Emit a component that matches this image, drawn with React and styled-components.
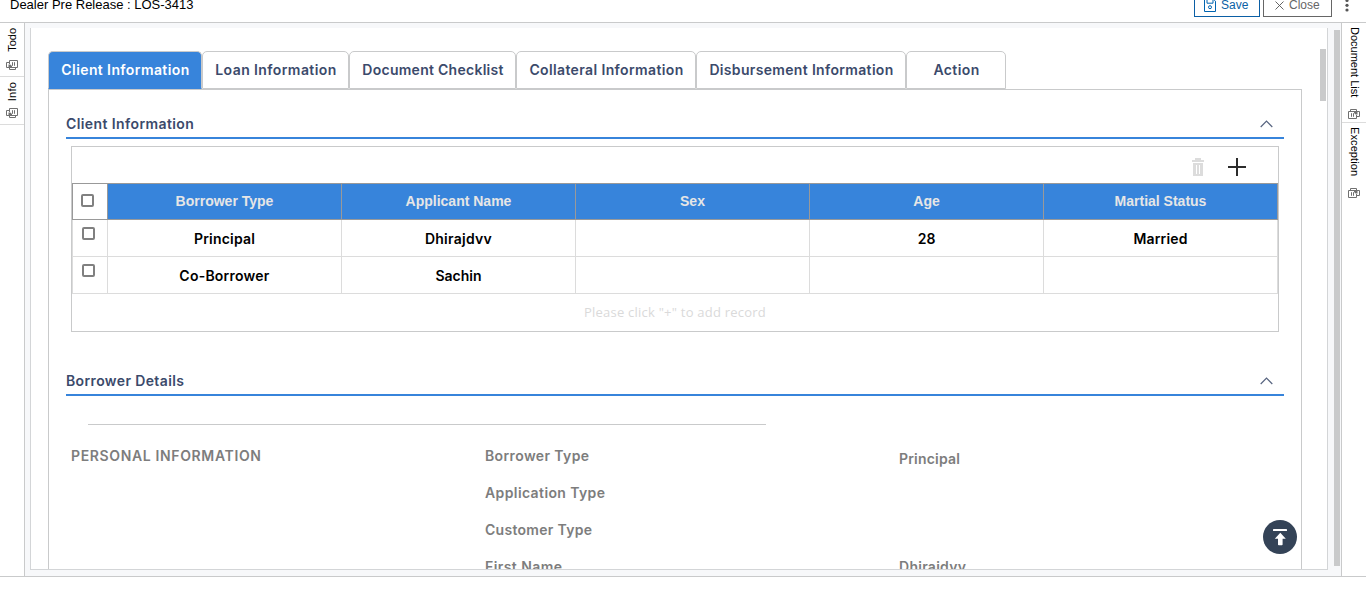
import React from "react";
import styled, { createGlobalStyle, css } from "styled-components";

const c = {
  blue: "#3784db",
  line: "#c9cacb",
  soft: "#dcdcdc",
  frame: "#d3d5d7",
  navy: "#3b4a6b",
  grey: "#7d7d7d",
  gutter: "#f7f8fa",
};

const Global = createGlobalStyle`
  *, *::before, *::after { box-sizing: border-box; }
  html, body { margin: 0; padding: 0; height: 100%; overflow: hidden; background: #fff; }
  body { font-family: "Inter", "Open Sans", sans-serif; font-size: 14px; }
`;

const arial = `"Liberation Sans", Arial, sans-serif`;

const tracked = css`
  letter-spacing: ${(p) => p.$track || 0}px;
`;

const Page = styled.div`
  display: flex;
  flex-direction: column;
  height: 577px;
  border-bottom: 1px solid ${c.line};
`;

const TopBar = styled.header`
  flex: none;
  display: flex;
  align-items: flex-start;
  height: 23px;
  padding: 0 15px 0 10px;
  border-bottom: 1px solid ${c.line};
`;

const Title = styled.div`
  flex: 1;
  font: 13px/9px ${arial};
  color: #000;
`;

const BarButton = styled.button`
  display: flex;
  align-items: center;
  flex: none;
  width: ${(p) => p.$width}px;
  height: 24px;
  margin: -7px 3px 0 0;
  padding: 0 0 0 ${(p) => p.$pad}px;
  gap: ${(p) => p.$gap}px;
  font: 12px/14px ${arial};
  color: ${(p) => p.$color};
  background: #fff;
  border: 1px solid ${(p) => p.$color};
  svg { flex: none; }
`;

const Kebab = styled.svg`
  flex: none;
  margin-left: 10px;
`;

const Body = styled.div`
  flex: 1;
  display: flex;
  min-height: 0;
`;

const Rail = styled.aside`
  flex: none;
  display: flex;
  flex-direction: column;
  width: 25px;
  background: #fff;
  border-${(p) => p.$edge}: 1px solid ${c.line};
`;

const RailItem = styled.div`
  display: flex;
  flex-direction: column;
  align-items: center;
  height: ${(p) => p.$height}px;
  padding-top: ${(p) => p.$top}px;
  border-bottom: ${(p) => (p.$last ? "none" : `1px solid ${c.soft}`)};
  svg { flex: none; margin-top: auto; margin-bottom: ${(p) => p.$foot}px; }
`;

const RailText = styled.span`
  writing-mode: vertical-rl;
  transform: ${(p) => (p.$up ? "rotate(180deg)" : "none")};
  margin-left: ${(p) => (p.$up ? 0 : 2)}px;
  font: 11px/12px ${arial};
  color: #000;
  ${tracked}
`;

const Stage = styled.main`
  flex: 1;
  display: flex;
  min-width: 0;
  padding: 5px 1px 6px 5px;
  background: ${c.gutter};
`;

const Frame = styled.div`
  position: relative;
  flex: 1;
  display: flex;
  min-width: 0;
  overflow: hidden;
  background: #fff;
  border: 1px solid ${c.frame};
  border-top: 0;
`;

const Scroller = styled.div`
  flex: none;
  width: 6px;
  height: ${(p) => p.$height}px;
  margin: ${(p) => p.$margin};
  background: ${c.line};
`;

const Content = styled.div`
  flex: none;
  width: 1254px;
  margin-left: 17px;
  padding-top: 23px;
`;

const Tabs = styled.nav`
  display: flex;
  height: 38px;
`;

const Tab = styled.button`
  flex: none;
  width: ${(p) => p.$width}px;
  height: 38px;
  padding: 0 0 1px 1px;
  font: 600 14px/20px "Inter", sans-serif;
  ${tracked}
  color: ${(p) => (p.$active ? "#fff" : c.navy)};
  background: ${(p) => (p.$active ? c.blue : "#fff")};
  border: 1px solid ${c.line};
  border-bottom-color: ${(p) => (p.$active ? c.blue : c.line)};
  border-radius: 5px 5px 0 0;
`;

const Panel = styled.div`
  height: 500px;
  padding: 22px 17px 0;
  border: 1px solid ${c.line};
`;

const SectionHead = styled.div`
  display: flex;
  align-items: center;
  justify-content: space-between;
  height: 27px;
  padding: 0 11px 2px 0;
  border-bottom: 2px solid ${c.blue};
`;

const SectionTitle = styled.h2`
  margin: 0;
  font: 600 14px/20px "Inter", sans-serif;
  ${tracked}
  color: ${c.navy};
`;

const GridBox = styled.div`
  height: 186px;
  margin: 7px 5px 37px;
  border: 1px solid ${c.line};
`;

const Toolbar = styled.div`
  display: flex;
  align-items: center;
  justify-content: flex-end;
  gap: 24px;
  height: 36px;
  padding: 4px 32px 0 0;
`;

const Table = styled.table`
  width: 1206px;
  table-layout: fixed;
  border-collapse: collapse;
`;

const Th = styled.th`
  width: ${(p) => p.$width}px;
  height: 36px;
  padding: 0 0 1px;
  font: bold 14px/18px ${arial};
  color: #e6e6e6;
  background: ${(p) => (p.$plain ? "#fff" : c.blue)};
  border: 1px solid #999;
`;

const Td = styled.td`
  height: 37px;
  padding: 2px 0 0;
  font: 600 14px/20px "Inter", sans-serif;
  text-align: center;
  color: #000;
  border: 1px solid ${c.soft};
  ${tracked}
`;

const Check = styled.span`
  display: block;
  width: 13px;
  height: 13px;
  margin: ${(p) => p.$margin};
  background: #fff;
  border: 2px solid #808080;
  border-radius: 2px;
`;

const Hint = styled.div`
  padding-top: 9px;
  font: 13px/18px "Open Sans", sans-serif;
  letter-spacing: 0.23px;
  text-align: center;
  color: #dadada;
`;

const Rule = styled.div`
  width: 678px;
  height: 1px;
  margin: 28px 0 12px 22px;
  background: ${c.line};
`;

const Details = styled.div`
  display: grid;
  grid-template-columns: 414px 414px 1fr;
  grid-auto-rows: 37px;
  padding-left: 5px;
`;

const Field = styled.div`
  padding-top: ${(p) => p.$drop || 0}px;
  font: 600 14px/37px "Inter", sans-serif;
  color: ${c.grey};
  ${tracked}
`;

const TopButton = styled.button`
  position: absolute;
  right: 30px;
  bottom: 15px;
  display: flex;
  padding: 0;
  border: 0;
  border-radius: 50%;
  background: #344357;
`;

const SaveIcon = () => (
  <svg width="12" height="13" viewBox="0 0 12 13" fill="none" stroke="#0064b0">
    <path d="M.5.5h9.3l1.7 1.7v10.3H.5z" />
    <path d="M3 .5v3.7h6V.5" />
    <circle cx="6" cy="8.2" r="1.5" />
  </svg>
);

const CloseIcon = () => (
  <svg width="9" height="9" viewBox="0 0 9 9" stroke="#555" strokeWidth=".9">
    <path d="M.5.5l8 8M8.5.5l-8 8" />
  </svg>
);

const DocsIcon = ({ turned }) => (
  <svg width="12" height="10" viewBox="0 0 12 10" fill="none" stroke="#707070">
    <g transform={turned ? "rotate(180 6 5)" : undefined}>
      <path d="M6 2.5H.5v7h8V6M3.5 4.2v3.6M5.5 4.2v3.6" />
      <path d="M2.5 2.5v-2h6V3" />
      <path d="M9 2.5h2.5v5H9" />
      <path d="M6 2h3.5v3.5H7.6L6 4z" fill="#707070" stroke="none" />
    </g>
  </svg>
);

const Chevron = () => (
  <svg width="13" height="8" viewBox="0 0 13 8" fill="none" stroke="#56637f" strokeWidth="1.2">
    <path d="M.7 7L6.5 1.2 12.3 7" />
  </svg>
);

const Trash = () => (
  <svg width="12" height="18" viewBox="0 0 12 18" fill="#dcdcdc">
    <path d="M3 0h6v2h3v2H0V2h3zM1 5h10v13H1zM4 7v9h1V7zM7 7v9h1V7z" fillRule="evenodd" />
  </svg>
);

const Plus = () => (
  <svg width="18" height="18" viewBox="0 0 18 18" fill="#2c2c2c">
    <path d="M8 0h2v8h8v2h-8v8H8v-8H0V8h8z" />
  </svg>
);

const ToTop = () => (
  <svg width="34" height="34" viewBox="0 0 34 34" fill="#fff">
    <rect x="10" y="9" width="14" height="2" rx=".6" />
    <path d="M17.3 12.8l5.5 5.9h-3.2v5.7q0 .8-.8.8h-3q-.8 0-.8-.8v-5.7h-3.2z" />
  </svg>
);

const tabs = [
  ["Client Information", 154, 0.4],
  ["Loan Information", 147, 0.41],
  ["Document Checklist", 167, 0.27],
  ["Collateral Information", 180, 0.37],
  ["Disbursement Information", 210, 0.33],
  ["Action", 100, 0.4],
];

const columns = ["Borrower Type", "Applicant Name", "Sex", "Age", "Martial Status"];

const rows = [
  [["Principal", 0.2], ["Dhirajdvv", 0.27], ["", 0], ["28", 0], ["Married", 0.15]],
  [["Co-Borrower", 0.23], ["Sachin", 0], ["", 0], ["", 0], ["", 0]],
];

const fields = [
  [["PERSONAL INFORMATION", 0.64], ["Borrower Type", 0.38], ["Principal", 0.2]],
  [["", 0], ["Application Type", 0.39], ["", 0]],
  [["", 0], ["Customer Type", 0.29], ["", 0]],
  [["", 0], ["First Name", 0.42], ["Dhirajdvv", 0.27]],
];

export default function App() {
  return (
    <>
      <Global />
      <Page>
        <TopBar>
          <Title>Dealer Pre Release : LOS-3413</Title>
          <BarButton $width={66} $pad={9} $gap={5} $color="#0b5fa5"><SaveIcon />Save</BarButton>
          <BarButton $width={69} $pad={11} $gap={5} $color="#666"><CloseIcon />Close</BarButton>
          <Kebab width="6" height="13" viewBox="0 0 6 13" fill="#555">
            <circle cx="2" cy="0.5" r="1.6" />
            <circle cx="2" cy="5.3" r="1.6" />
            <circle cx="2" cy="10" r="1.6" />
          </Kebab>
        </TopBar>
        <Body>
          <Rail $edge="right">
            <RailItem $height={54} $top={5} $foot={6}><RailText $up>Todo</RailText><DocsIcon turned /></RailItem>
            <RailItem $height={48} $top={5} $foot={6}><RailText $up $track={0.2}>Info</RailText><DocsIcon turned /></RailItem>
          </Rail>
          <Stage>
            <Frame>
              <Content>
                <Tabs>
                  {tabs.map(([label, width, track], i) => (
                    <Tab key={label} $width={width} $track={track} $active={i === 0}>{label}</Tab>
                  ))}
                </Tabs>
                <Panel>
                  <SectionHead><SectionTitle $track={0.4}>Client Information</SectionTitle><Chevron /></SectionHead>
                  <GridBox>
                    <Toolbar><Trash /><Plus /></Toolbar>
                    <Table>
                      <thead>
                        <tr>
                          <Th $width={35} $plain><Check $margin="-2px 0 0 8px" /></Th>
                          {columns.map((name) => <Th key={name} $width={234}>{name}</Th>)}
                        </tr>
                      </thead>
                      <tbody>
                        {rows.map((row, r) => (
                          <tr key={r}>
                            <Td><Check $margin="-11px 0 0 9px" /></Td>
                            {row.map(([text, track], i) => <Td key={i} $track={track}>{text}</Td>)}
                          </tr>
                        ))}
                      </tbody>
                    </Table>
                    <Hint>Please click "+" to add record</Hint>
                  </GridBox>
                  <SectionHead><SectionTitle $track={0.37}>Borrower Details</SectionTitle><Chevron /></SectionHead>
                  <Rule />
                  <Details>
                    {fields.map((row, r) =>
                      row.map(([text, track], i) => (
                        <Field key={`${r}-${i}`} $track={track} $drop={i === 2 && r === 0 ? 3 : 0}>{text}</Field>
                      ))
                    )}
                  </Details>
                </Panel>
              </Content>
              <Scroller $height={52} $margin="21px 0 0 18px" />
              <TopButton aria-label="Scroll to top"><ToTop /></TopButton>
            </Frame>
            <Scroller $height={536} $margin="2px 0 0 6px" />
          </Stage>
          <Rail $edge="left">
            <RailItem $height={100} $top={4} $foot={3}><RailText>Document List</RailText><DocsIcon /></RailItem>
            <RailItem $height={76} $top={4} $foot={1} $last><RailText $track={0.1}>Exception</RailText><DocsIcon /></RailItem>
          </Rail>
        </Body>
      </Page>
    </>
  );
}
